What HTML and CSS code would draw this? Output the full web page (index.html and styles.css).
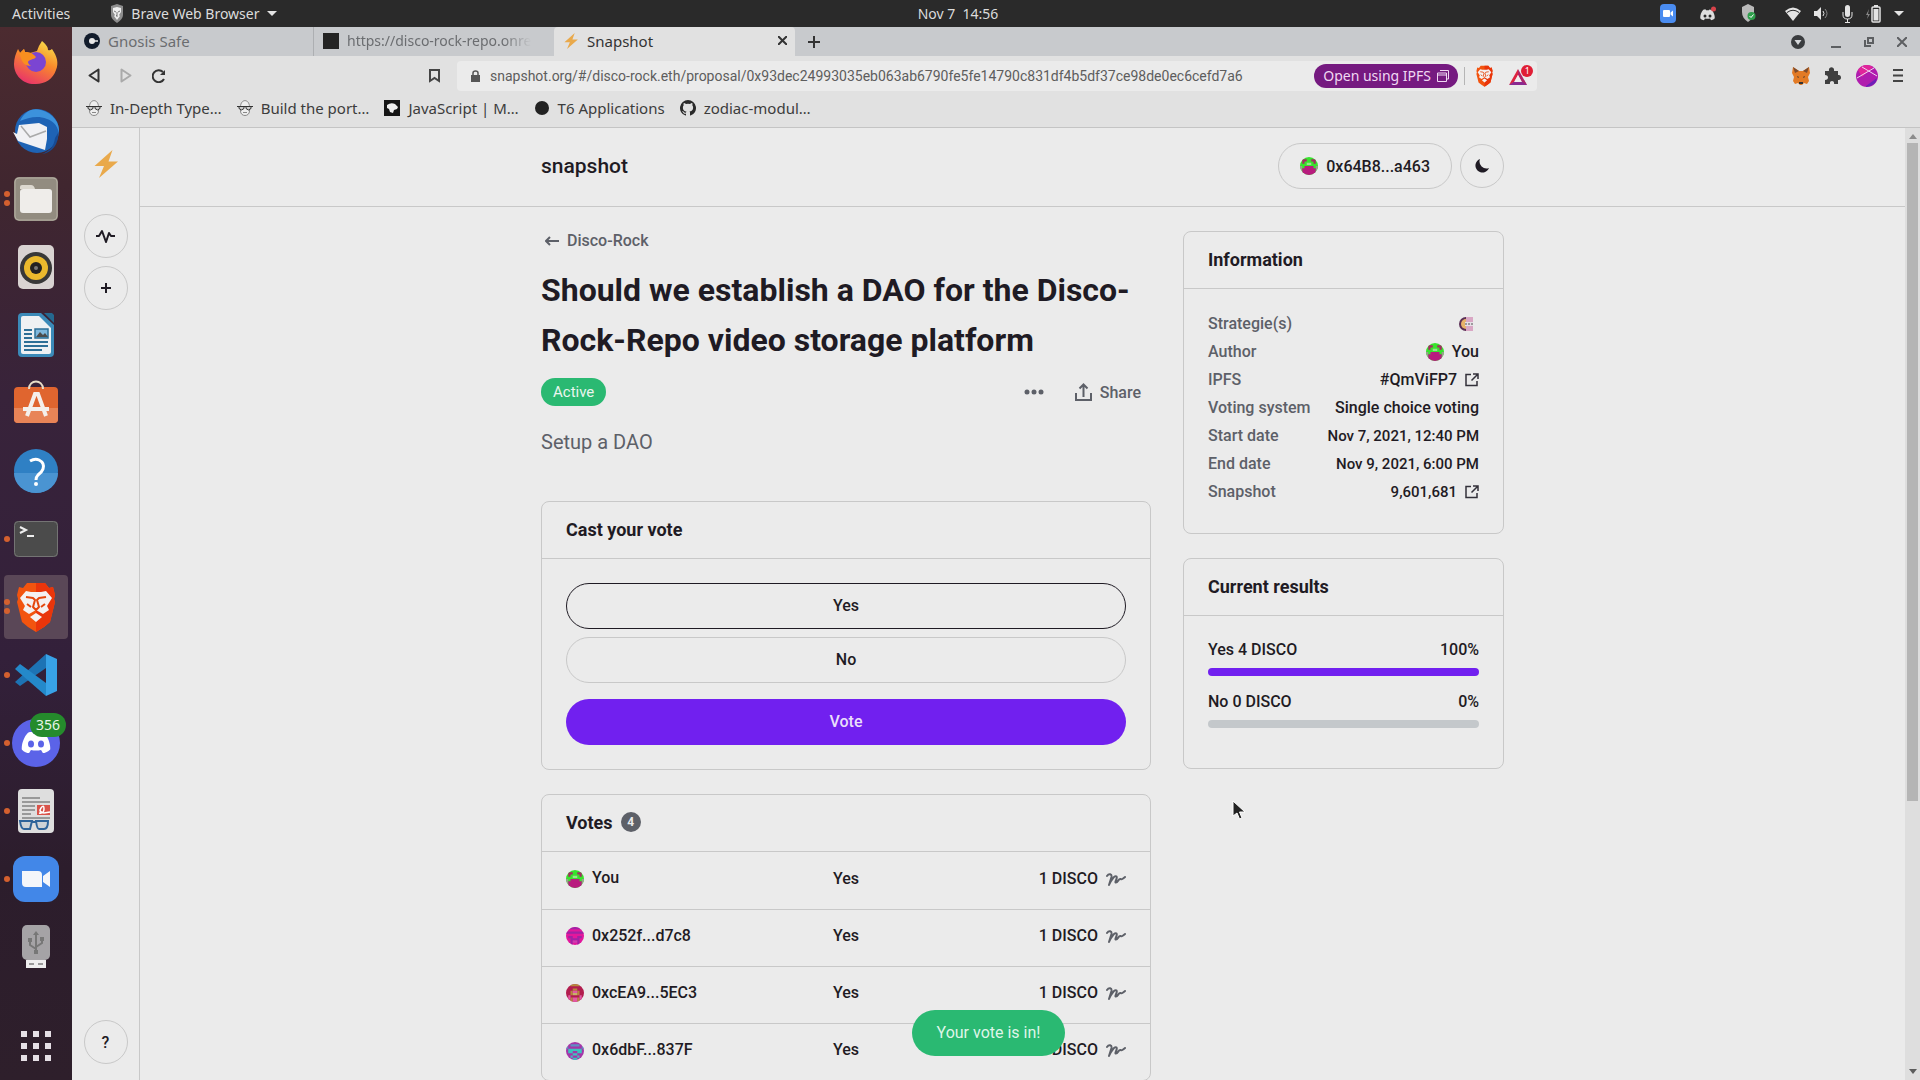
FILE: index.html
```
<!DOCTYPE html>
<html lang="en">
<head>
    <meta charset="UTF-8">
    <meta name="viewport" content="width=device-width, initial-scale=1.0">
    <title>Snapshot</title>
    <link rel="stylesheet" href="styles.css">
</head>
<body>
    <!-- shared icons -->
    <svg class="sprite" aria-hidden="true">
        <symbol id="bolt" viewBox="0 0 24 28">
            <path fill="#e9a94b" d="M18.500 0 0.500 16h9.500L5 28 24 11.500h-9.500z"/>
        </symbol>
        <symbol id="face" viewBox="0 0 16 16">
            <path fill="#eee" stroke="#888" d="M3.500 7c0-8.500 9-8.500 9 0v4c0 6-9 6-9 0z"/>
            <path fill="#ccc" stroke="#333" d="M0 6.500h16M2 6.500h5v2q-2.500 3-5 0zM9 6.500h5v2q-2.500 3-5 0z"/>
            <path stroke="#888" d="M6 12.500h4"/>
        </symbol>
        <symbol id="ava-you" viewBox="0 0 8 8">
            <path fill="#37e22d" d="M0 0h8v8H0z"/>
            <path fill="#a52a63" d="M1 1h2v1H1zM5 1h2v1H5zM1 2h1v1H1zM6 2h1v1H6z"/>
            <path fill="#9be08f" d="M3 2.500h2v1H3z"/>
            <path fill="#98a08d" d="M0 4h1v3H0zM7 4h1v3H7z"/>
            <path fill="#b81b7e" d="M2 4h4v1h1v3H1V5h1z"/>
        </symbol>
        <symbol id="ava-pink" viewBox="0 0 8 8">
            <path fill="#e3179c" d="M0 0h8v8H0z"/>
            <path fill="#a022a5" d="M1 0h6v1H1zM0 2h8v1H0zM1 4h2v1H1zM5 4h2v1H5zM2 6h1v2H2zM5 6h1v2H5zM2 5h4v1H2z"/>
            <path fill="#cc3fb0" d="M3 6h2v1H3z"/>
        </symbol>
        <symbol id="ava-red" viewBox="0 0 8 8">
            <path fill="#b21d4e" d="M0 0h8v8H0z"/>
            <path fill="#b58a3b" d="M2 0h4v1H2zM2 3h1v2H2zM5 3h1v2H5zM3 2h2v1H3zM2 6h1v2H2zM5 6h1v2H5z"/>
            <path fill="#e358a5" d="M3 3h2v1H3zM1 5h1v2H1zM6 5h1v2H6zM3 6h2v2H3z"/>
            <path fill="#c7b06a" d="M3 4h2v1H3z"/>
        </symbol>
        <symbol id="ava-teal" viewBox="0 0 8 8">
            <path fill="#a535a8" d="M0 0h8v8H0z"/>
            <path fill="#5f8fc4" d="M2 1h4v1H2zM0 2h1v1H0zM7 2h1v1H7z"/>
            <path fill="#3cc3bd" d="M1 3h6v1H1zM1 4h2v1H1zM5 4h2v1H5zM3 5h2v1H3zM2 6h1v1H2zM5 6h1v1H5zM3 7h2v1H3z"/>
        </symbol>
        <symbol id="sign" viewBox="0 0 20 14">
            <path fill="none" stroke="#5d6068" stroke-width="2" stroke-linecap="round" stroke-linejoin="round" d="M1 3c2-3 5-2 4.500 1L3 12C5 7 9 2 10.500 3.500S8 9.500 10 9.500s2.500-4 4.500-3.500 1 1 4.500-2"/>
        </symbol>
        <symbol id="external" viewBox="0 0 14 14">
            <path fill="none" stroke="#33313a" stroke-width="1.500" d="M6 1.500H1v11h11V8M8 1h5v5M13 1 6.500 7.500"/>
        </symbol>
        <symbol id="lion" viewBox="0 0 40 50">
            <path fill="#f2540f" d="M11 1h18l4 5 4-1 2 8-1 4 1 3-5 20-6 5-8 5-8-5-6-5L1 20l1-3-1-4 2-8 4 1z"/>
            <path fill="#e9350b" d="M20 1h9l4 5 4-1 2 8-1 4 1 3-5 20-6 5-8 5z"/>
            <path fill="#f4f1f1" d="M10 9l5 1h10l5-1 6 7-5 8 2 4-6 4-7-4-7 4-6-4 2-4-5-8zM14 35l6-4 6 4-6 5z"/>
            <path fill="none" stroke="#e4470d" stroke-width="2" stroke-linejoin="round" d="M10 15l7 1 2 2-2 7 3 3 3-3-2-7 2-2 7-1M11 22l4 3M29 22l-4 3"/>
        </symbol>
        <symbol id="discord" viewBox="0 0 32 24">
            <path d="M7 1c2-1 4-1.500 5-1l1 2q3-.5 6 0l1-2c2 0 4 .5 6 2 3 4 6 11 5.500 17-3 3-6 4-8 4l-2-3.500q-5.500 1.500-11 0L8.500 23C6 23 3 22 .500 19 0 13 3 5 7 1z"/>
        </symbol>
    </svg>

    <header class="topbar">
        <div class="topbar-left">
            <button>Activities</button>
            <button class="app-menu">
                <svg width="14" height="19" viewBox="0 0 14 19"><path fill="#8d8d8d" d="M1 2l6-2 6 2v9q0 4-6 8-6-4-6-8z"/><path fill="#eee" d="M3 4l4-1 4 1v4l-2 3 1 1-3 4-3-4 1-1-2-3z"/><path stroke="#777" fill="none" d="M4 7l2 1M10 7 8 8M7 8v3l-1 1h2"/></svg>
                Brave Web Browser
                <span class="caret"></span>
            </button>
        </div>
        <time>Nov 7&nbsp; 14:56</time>
        <div class="topbar-right">
            <svg width="16" height="19" viewBox="0 0 16 19"><rect width="16" height="19" rx="4" fill="#4a8cf0"/><rect x="3" y="6" width="7" height="7" rx="1" fill="#fff"/><path fill="#fff" d="M10.500 8.500 13 6.500v6l-2.500-2z"/></svg>
            <svg class="tray-discord" width="17" height="16" viewBox="0 0 17 16"><use href="#discord" x="0" y="3" width="15" height="12" fill="#ddd"/><circle cx="5" cy="10" r="1.500" fill="#2a2a2a"/><circle cx="10" cy="10" r="1.500" fill="#2a2a2a"/><circle cx="13.500" cy="3" r="2.500" fill="#d8434a"/></svg>
            <svg class="tray-shield" width="14" height="19" viewBox="0 0 14 19"><path fill="#b9b9b9" d="M0 3l6-3 6 3v5q0 6-6 10-6-4-6-10z"/><circle cx="9.500" cy="12" r="4" fill="#2e9e4b"/><path d="M7.500 12l1.500 1.500 2.500-3" stroke="#fff" fill="none"/></svg>
            <svg width="16" height="14" viewBox="0 0 16 14"><path fill="#e4e4e4" d="M8 14 0 4q8-7 16 0z"/><path stroke="#2a2a2a" fill="none" d="M2 5.500q6-4.500 12 0"/></svg>
            <svg width="15" height="15" viewBox="0 0 15 15"><path fill="#e4e4e4" d="M0 5h3l4-4v13l-4-4H0z"/><path fill="none" stroke="#e4e4e4" d="M9 5q2 2.500 0 5"/><path fill="none" stroke="#888" d="M11 3q4 4.500 0 9"/></svg>
            <svg width="11" height="18" viewBox="0 0 11 18"><rect x="3" width="5" height="12" rx="2.500" fill="#e4e4e4"/><path fill="none" stroke="#e4e4e4" d="M1 7v3q0 4 4.500 4T10 10V7M5.500 14v3.500M3 17.500h5"/></svg>
            <svg width="15" height="18" viewBox="0 0 15 18"><path fill="#888" d="M3 4 0 10h2l-1 4 3-5H2z"/><rect x="6" y="2" width="8" height="15" rx="1" fill="none" stroke="#e4e4e4" stroke-width="1.500"/><path fill="#e4e4e4" d="M8 0h4v2H8zM7.500 4h5v11.500h-5z"/></svg>
            <span class="caret"></span>
        </div>
    </header>

    <div class="desktop">
        <nav class="dock">
            <a href="#" title="Firefox"><svg width="48" height="48" viewBox="0 0 48 48"><defs><linearGradient id="ff" x1=".8" y1="0" x2=".3" y2="1"><stop offset="0" stop-color="#f7e14b"/><stop offset=".45" stop-color="#f98a2b"/><stop offset="1" stop-color="#e8336a"/></linearGradient></defs><path fill="url(#ff)" d="M30 2c3 3 6 5 6 9 3 1 3-1 4-1 5 7 7 14 4 21-3 9-11 14-20 14C12 46 2 37 2 25c0-6 2-11 4-15l2 4 4-4 1 3 5 1 7-2q2-6 5-10z"/><circle cx="24" cy="23" r="10" fill="#7b45d2"/><path fill="#f98f1f" d="M6 10l2 4 4-4 1 3c3 0 6 0 9 3l2 2c-2 3-7 2-8 5 0 2 2 3 3 4-5 0-9-3-10-8z"/></svg></a>
            <a href="#" title="Thunderbird"><svg width="48" height="48" viewBox="0 0 48 48"><circle cx="25" cy="24" r="22" fill="#1e63b5"/><path fill="#3c92dc" d="M8 14C12 5 20 0 29 3c12 3 19 13 18 23-2-8-6-12-12-14-10-4-19-1-27 2z"/><path fill="#174b94" d="M30 47c8-3 12-8 13-16l3-5c1 11-6 20-16 21z"/><path fill="#f1f1f4" d="M7 18l20-2 8 4v12l-2 11-27-9-5-9 4 2z"/><path d="M9 19l9 11 16-6" fill="none" stroke="#aaa" stroke-width="1.500"/></svg></a>
            <a href="#" class="open two" title="Files"><svg width="44" height="44" viewBox="0 0 44 44"><rect width="44" height="44" rx="5" fill="#928c80"/><rect x="1" y="1" width="42" height="42" rx="4" fill="none" stroke="#b3ada1"/><path fill="#dcd8cf" d="M6 10q0-2 2-2h9q3 0 4 4H6z"/><rect x="6" y="12" width="32" height="24" rx="3" fill="#efedea"/></svg></a>
            <a href="#" title="Rhythmbox"><svg width="38" height="46" viewBox="0 0 38 46"><rect x="1" y="1" width="36" height="44" rx="5" fill="#d9d3d2"/><circle cx="19" cy="24" r="16" fill="#383838"/><circle cx="19" cy="24" r="12" fill="#eab92d"/><circle cx="19" cy="24" r="6" fill="#222"/><circle cx="19" cy="24" r="2" fill="#777"/></svg></a>
            <a href="#" title="LibreOffice Writer"><svg width="36" height="44" viewBox="0 0 36 44"><path fill="#3b8ab8" d="M4 0h19l13 12v28q0 4-4 4H4q-4 0-4-4V4q0-4 4-4z"/><path fill="#25688f" d="M26 0h8l2 2v8z"/><path fill="#eef1f3" d="M5 3h16l12 12v24q0 2-2 2H5q-2 0-2-2V5q0-2 2-2z"/><path stroke="#2d6f96" stroke-width="2" d="M6 17h8M6 21h8M6 25h8M6 29h24M6 33h24M6 37h18"/><path fill="#7fb8dd" stroke="#2d6f96" stroke-width="1.500" d="M17 16h13v9H17z"/><path fill="#4c4c4c" d="M18 24l4-5 3 3 2-2 3 4z"/></svg></a>
            <a href="#" title="Ubuntu Software"><svg width="44" height="46" viewBox="0 0 44 46"><rect y="7" width="44" height="36" rx="4" fill="#e0652f"/><path fill="#e88457" d="M0 28h44v11q0 4-4 4H4q-4 0-4-4z"/><path d="M15 9c0-10 14-10 14 0" fill="none" stroke="#e8ddc8" stroke-width="2"/><path fill="none" stroke="#f4f0ec" stroke-width="4" d="M13 36l8-22h3l8 22M9 29h26"/></svg></a>
            <a href="#" title="Help"><svg width="44" height="44" viewBox="0 0 44 44"><circle cx="22" cy="22" r="22" fill="#2f80c4"/><path fill="#4a94d2" d="M0 24h44a22 20 0 0 1-44 0z"/><path d="M16 12q5-3 9-1 6 3 4 9-1 3-5 6-2 2-2 5" fill="none" stroke="#fff" stroke-width="3"/><circle cx="22" cy="35" r="2" fill="#fff"/></svg></a>
            <a href="#" class="open" title="Terminal"><svg width="44" height="36" viewBox="0 0 44 36"><rect width="44" height="36" rx="4" fill="#4b4b4b"/><rect x=".5" y=".5" width="43" height="35" rx="4" fill="none" stroke="#747474"/><path fill="none" stroke="#eee" stroke-width="2" d="M6 6l6 3-6 3M13 15h7"/></svg></a>
            <a href="#" class="open two current" title="Brave"><svg width="40" height="50"><use href="#lion"/></svg></a>
            <a href="#" class="open" title="Visual Studio Code"><svg width="42" height="42" viewBox="0 0 42 42"><path fill="#1d73b4" d="M31 0v14L5 32l-5-4z"/><path fill="#2489ca" d="M5 10 31 29v13L0 15z"/><path fill="#38a2e6" d="M31 0l11 5v32l-11 5z"/></svg></a>
            <a href="#" class="open" title="Discord"><svg width="48" height="48" viewBox="0 0 48 48"><circle cx="24" cy="24" r="24" fill="#5b63e8"/><use href="#discord" x="9" y="13" width="30" height="22" fill="#fff"/><ellipse cx="19" cy="25" rx="3" ry="3.500" fill="#5b63e8"/><ellipse cx="29" cy="25" rx="3" ry="3.500" fill="#5b63e8"/></svg><span class="unread">356</span></a>
            <a href="#" class="open" title="Document Viewer"><svg width="36" height="44" viewBox="0 0 36 44"><rect width="36" height="44" rx="4" fill="#dedede"/><path stroke="#999" stroke-width="2" d="M4 9h18M4 13h28M4 17h13M4 21h13M4 25h9M4 29h28"/><path fill="#d9534a" d="M19 16h13v10H19z"/><path d="M21 24q5 1 5-4t-3-1 3 5l6-1" fill="none" stroke="#fff" stroke-width="1.500"/><path fill="#cfd3d6" stroke="#2f649a" stroke-width="2" d="M2 32h12l-2 8H6q-3 0-4-8zM18 32h12q0 8-4 8h-5q-2 0-3-8zM14 33h4"/></svg></a>
            <a href="#" class="open" title="Zoom"><svg width="46" height="46" viewBox="0 0 46 46"><rect width="46" height="46" rx="12" fill="#4287e8"/><path fill="#f4f6fa" d="M9 15h16q4 0 4 4v12H13q-4 0-4-4zM30 20l7-5v16l-7-5z"/></svg></a>
            <a href="#" title="USB drive"><svg width="28" height="44" viewBox="0 0 28 44"><rect width="28" height="35" rx="5" fill="#a5a3a6"/><path fill="#eee" d="M4 35h20v8H4z"/><path fill="#999" d="M7 38h5v2H7zM16 38h5v2h-5z"/><path fill="none" stroke="#777" stroke-width="2" d="M14 28V9M14 24l-6-4v-4M14 22l6-4v-4"/><path fill="#777" d="M11 10l3-4 3 4zM12 25h4v4h-4zM6 13h4v4H6zM18 12h4v4h-4z"/></svg></a>
            <a href="#" class="all-apps" title="Show Applications"><svg width="30" height="30" viewBox="0 0 30 30"><path stroke="#e6e0e6" stroke-width="6" stroke-dasharray="6 6" d="M0 3h30M0 15h30M0 27h30"/></svg></a>
        </nav>

        <div class="browser">
            <div class="tabs">
                <div class="tab">
                    <svg width="16" height="16" viewBox="0 0 16 16"><circle cx="8" cy="8" r="8" fill="#121c2c"/><circle cx="8" cy="8" r="3" fill="#e8e8e8"/><path d="M8 8h6" stroke="#e8e8e8" stroke-width="1.500"/></svg>
                    <span>Gnosis Safe</span>
                </div>
                <div class="tab">
                    <svg width="16" height="16"><path fill="#242424" d="M0 0h16v16H0z"/></svg>
                    <span class="faded">https://disco-rock-repo.onre</span>
                </div>
                <div class="tab active">
                    <svg width="16" height="16"><use href="#bolt"/></svg>
                    <span>Snapshot</span>
                    <button aria-label="Close tab"><svg width="9" height="9" viewBox="0 0 9 9"><path stroke="#333" stroke-width="2" d="M0 0l9 9M9 0 0 9"/></svg></button>
                </div>
                <button class="new-tab" aria-label="New tab"><svg width="12" height="12" viewBox="0 0 12 12"><path stroke="#333" stroke-width="2" d="M6 0v12M0 6h12"/></svg></button>
                <div class="window-buttons">
                    <button aria-label="Search tabs"><svg width="14" height="14" viewBox="0 0 14 14"><circle cx="7" cy="7" r="7" fill="#3a3c3f"/><path fill="#d5d7da" d="M3.500 5h7L7 10z"/></svg></button>
                    <button aria-label="Minimize"><svg width="10" height="12" viewBox="0 0 10 12"><path stroke="#5d5f62" stroke-width="2" d="M0 11h10"/></svg></button>
                    <button aria-label="Restore"><svg width="10" height="10" viewBox="0 0 10 10"><path fill="none" stroke="#5d5f62" stroke-width="2" d="M4 1h5v5H4zM1 3v6h6"/></svg></button>
                    <button aria-label="Close"><svg width="10" height="10" viewBox="0 0 10 10"><path stroke="#5d5f62" stroke-width="2" d="M0 0l10 10M10 0 0 10"/></svg></button>
                </div>
            </div>

            <div class="toolbar">
                <div class="nav-buttons">
                    <button aria-label="Back"><svg width="12" height="15" viewBox="0 0 12 15"><path fill="none" stroke="#333" stroke-width="2" stroke-linejoin="round" d="M10.500 1.500v12L1.500 7.500z"/></svg></button>
                    <button aria-label="Forward" disabled><svg width="12" height="15" viewBox="0 0 12 15"><path fill="none" stroke="#aaa" stroke-width="2" stroke-linejoin="round" d="M1.500 1.500v12l9-6z"/></svg></button>
                    <button aria-label="Reload"><svg width="14" height="14" viewBox="0 0 14 14"><path fill="none" stroke="#333" stroke-width="2" d="M12 10A6 6 0 1 1 11 3"/><path fill="#333" d="M13 1v5H8z"/></svg></button>
                </div>
                <button class="save" aria-label="Bookmark"><svg width="11" height="14" viewBox="0 0 11 14"><path fill="none" stroke="#444" stroke-width="2" d="M1 1h9v11L5.500 9 1 12z"/></svg></button>
                <div class="address">
                    <svg width="9" height="12" viewBox="0 0 9 12"><path fill="#555" d="M0 5h9v7H0z"/><path fill="none" stroke="#555" stroke-width="1.500" d="M2 5V3q0-2 2.500-2T7 3v2"/></svg>
                    <input type="text" aria-label="Address" value="snapshot.org/#/disco-rock.eth/proposal/0x93dec24993035eb063ab6790fe5fe14790c831df4b5df37ce98de0ec6cefd7a6">
                    <button class="ipfs">Open using IPFS <svg width="12" height="12" viewBox="0 0 12 12"><path fill="none" stroke="#f0d8f3" d="M3 .5h8.500V9H10M.5 3h9v8.500h-9zM.5 5h9"/></svg></button>
                    <i class="divider"></i>
                    <button class="shield" aria-label="Brave Shields"><svg width="17" height="22"><use href="#lion"/></svg></button>
                    <button class="rewards" aria-label="Brave Rewards"><svg width="24" height="22" viewBox="0 0 24 22"><path fill="#8a2a90" d="M0 20h18l-3-5H6z"/><path fill="#dd2440" d="M9 4 0 20l6-4 3-6z"/><path fill="#b02468" d="M9 4l9 16-6-4-3-6z"/><path fill="#eee" d="M9 10l4 7H5z"/><circle cx="18" cy="6" r="6" fill="#e01e35"/></svg><span>1</span></button>
                </div>
                <div class="extensions">
                    <button aria-label="MetaMask"><svg width="18" height="18" viewBox="0 0 18 18"><path fill="#e27a25" d="M1 0l6 4h4l6-4 1 6-2 4 1 4-2 3-3-1-2 2H8l-2-2-3 1-2-3 1-4-2-4z"/><path fill="#7d4b2d" d="M1 0l6 4-4 2zM17 0l-6 4 4 2z"/><path fill="#333" d="M5 9l2 1-1 1zM13 9l-2 1 1 1zM7 15h4v2H7z"/></svg></button>
                    <button aria-label="Extensions"><svg width="16" height="17" viewBox="0 0 16 17"><path fill="#3f3f3f" d="M0 4h4c-1-5 6-5 5 0h4v4c4-1 4 6 0 5v4H9c1-4-5-4-4 0H0v-4c4 0 4-5 0-5z"/></svg></button>
                    <button aria-label="Profile"><svg width="22" height="22" viewBox="0 0 22 22"><circle cx="11" cy="11" r="11" fill="#b01cae"/><path fill="#e0259a" d="M2 5Q8-3 17 2L6 12z"/><path fill="#6c20b8" d="M10 21l11-8q-1 8-11 9z"/><path stroke="#efd6f0" fill="none" d="M1 13 18 3M6 2l15 9"/></svg></button>
                    <button aria-label="Menu"><svg width="10" height="13" viewBox="0 0 10 13"><path stroke="#444" stroke-width="2" d="M0 1h10M0 6.500h10M0 12h10"/></svg></button>
                </div>
            </div>

            <div class="bookmarks">
                <a href="#"><svg width="16" height="16"><use href="#face"/></svg>In-Depth Type…</a>
                <a href="#"><svg width="16" height="16"><use href="#face"/></svg>Build the port…</a>
                <a href="#"><svg width="16" height="16" viewBox="0 0 16 16"><path fill="#151515" d="M0 0h16v16H0z"/><path fill="#eee" d="M3 5q4-3 8-1l3 3-1 2-3 1-1 3-3-1-1-3-2-1z"/></svg>JavaScript | M…</a>
                <a href="#"><svg width="16" height="16" viewBox="0 0 16 16"><circle cx="8" cy="8" r="7" fill="#222"/></svg>T6 Applications</a>
                <a href="#"><svg width="16" height="16" viewBox="0 0 16 16"><path fill="#2a2a2a" d="M8 0a8 8 0 0 0-2.500 15.600c.4.100.5-.2.500-.4v-1.500c-2.200.5-2.700-1-2.700-1-.4-.9-.9-1.200-.9-1.200-.7-.5.100-.5.100-.5.800.1 1.200.8 1.200.8.700 1.300 1.900.9 2.300.7.100-.5.300-.9.500-1.100-1.800-.2-3.600-.9-3.600-4 0-.9.300-1.600.8-2.100-.1-.3-.4-1.100.1-2.200 0 0 .7-.2 2.200.8a7.600 7.600 0 0 1 4 0c1.500-1 2.200-.8 2.200-.8.500 1.100.2 1.900.1 2.200.5.500.8 1.200.8 2.100 0 3.100-1.900 3.700-3.600 3.900.3.300.5.800.5 1.500v2.400c0 .2.100.5.500.4A8 8 0 0 0 8 0z"/></svg>zodiac-modul…</a>
            </div>

            <div class="page">
                <aside class="sidebar">
                    <a href="#" class="logo" aria-label="Snapshot"><svg width="24" height="28"><use href="#bolt"/></svg></a>
                    <button class="round" aria-label="Activity"><svg width="19" height="14" viewBox="0 0 19 14"><path fill="none" stroke="#1f1b24" stroke-width="2" stroke-linejoin="round" d="M0 7h3l3-5 4 11 3-9 2 3h4"/></svg></button>
                    <button class="round" aria-label="New space"><svg width="10" height="10" viewBox="0 0 10 10"><path stroke="#1f1b24" stroke-width="2" d="M5 0v10M0 5h10"/></svg></button>
                    <button class="round help">?</button>
                </aside>

                <div class="content">
                    <header class="page-header">
                        <div class="container">
                            <a href="#" class="brand">snapshot</a>
                            <button class="account"><svg class="avatar"><use href="#ava-you"/></svg>0x64B8...a463</button>
                            <button class="round theme" aria-label="Dark mode"><svg width="14" height="14" viewBox="0 0 14 14"><path fill="#1f1b24" d="M5 0a7 7 0 1 0 9 9A7 7 0 0 1 5 0z"/></svg></button>
                        </div>
                    </header>

                    <div class="container columns">
                        <main>
                            <a href="#" class="back"><svg width="14" height="10" viewBox="0 0 14 10"><path fill="none" stroke="#5d6068" stroke-width="2" d="M14 5H2M5 1 1 5l4 4"/></svg>Disco-Rock</a>
                            <h1>Should we establish a DAO for the Disco-Rock-Repo video storage platform</h1>
                            <div class="meta">
                                <span class="status">Active</span>
                                <button class="more" aria-label="More"><svg width="20" height="6" viewBox="0 0 20 6"><circle cx="3" cy="3" r="2.500"/><circle cx="10" cy="3" r="2.500"/><circle cx="17" cy="3" r="2.500"/></svg></button>
                                <button class="share"><svg width="17" height="18" viewBox="0 0 17 18"><path fill="none" stroke="#5d6068" stroke-width="2" d="M1 10v7h15v-7M8.500 14V2M4.500 5.500l4-4 4 4"/></svg>Share</button>
                            </div>
                            <p class="body">Setup a DAO</p>

                            <section class="card">
                                <h2>Cast your vote</h2>
                                <div class="card-body choices">
                                    <button class="choice selected">Yes</button>
                                    <button class="choice">No</button>
                                    <button class="choice submit">Vote</button>
                                </div>
                            </section>

                            <section class="card">
                                <h2>Votes <span class="count">4</span></h2>
                                <table class="votes">
                                    <tr><td><svg class="avatar"><use href="#ava-you"/></svg><a href="#">You</a></td><td>Yes</td><td>1 DISCO<svg class="sign"><use href="#sign"/></svg></td></tr>
                                    <tr><td><svg class="avatar"><use href="#ava-pink"/></svg><a href="#">0x252f...d7c8</a></td><td>Yes</td><td>1 DISCO<svg class="sign"><use href="#sign"/></svg></td></tr>
                                    <tr><td><svg class="avatar"><use href="#ava-red"/></svg><a href="#">0xcEA9...5EC3</a></td><td>Yes</td><td>1 DISCO<svg class="sign"><use href="#sign"/></svg></td></tr>
                                    <tr><td><svg class="avatar"><use href="#ava-teal"/></svg><a href="#">0x6dbF...837F</a></td><td>Yes</td><td>1 DISCO<svg class="sign"><use href="#sign"/></svg></td></tr>
                                </table>
                            </section>
                        </main>

                        <aside class="side">
                            <section class="card">
                                <h2>Information</h2>
                                <dl class="card-body info">
                                    <div><dt>Strategie(s)</dt><dd><svg class="strategy" viewBox="0 0 16 16"><path fill="#d9a7c4" d="M8 1h8v14H8z"/><path fill="#5b2f55" d="M9 1a7 7 0 0 0 0 14z"/><path fill="#e8b36a" d="M9 3a5 5 0 0 0 0 10z"/><path fill="#e6dfe6" d="M8 6h8v4H8z"/><path stroke="#555" d="M8 8h8" stroke-dasharray="2 1"/></svg></dd></div>
                                    <div><dt>Author</dt><dd><svg class="avatar"><use href="#ava-you"/></svg><a href="#">You</a></dd></div>
                                    <div><dt>IPFS</dt><dd><a href="#">#QmViFP7<svg class="external"><use href="#external"/></svg></a></dd></div>
                                    <div><dt>Voting system</dt><dd>Single choice voting</dd></div>
                                    <div><dt>Start date</dt><dd class="number">Nov 7, 2021, 12:40 PM</dd></div>
                                    <div><dt>End date</dt><dd class="number">Nov 9, 2021, 6:00 PM</dd></div>
                                    <div><dt>Snapshot</dt><dd class="number"><a href="#">9,601,681<svg class="external"><use href="#external"/></svg></a></dd></div>
                                </dl>
                            </section>

                            <section class="card">
                                <h2>Current results</h2>
                                <div class="card-body results">
                                    <div class="result"><span>Yes 4 DISCO</span><span>100%</span></div>
                                    <div class="bar"><div style="width: 100%"></div></div>
                                    <div class="result"><span>No 0 DISCO</span><span>0%</span></div>
                                    <div class="bar"><div style="width: 0%"></div></div>
                                </div>
                            </section>
                        </aside>
                    </div>
                </div>

                <div class="scrollbar"><i class="up"></i><i class="thumb"></i><i class="down"></i></div>
                <div class="toast" role="status">Your vote is in!</div>
            </div>
        </div>
    </div>

    <svg class="cursor" viewBox="0 0 14 20"><path fill="#222" stroke="#fff" d="M1 1v15l4-3 2.500 6 2.500-1-2.500-6H13z"/></svg>
</body>
</html>
```
FILE: styles.css
```
* {
    box-sizing: border-box;
}
body {
    margin: 0;
    height: 100vh;
    display: flex;
    flex-direction: column;
    overflow: hidden;
    font-family: "Noto Sans", "Open Sans", sans-serif;
    font-size: 14px;
    color: #3c3c3c;
    background: #2a2a2a;
}
button {
    font: inherit;
    color: inherit;
    background: none;
    border: none;
    padding: 0;
    cursor: pointer;
}
a {
    color: inherit;
    text-decoration: none;
}
svg {
    flex: none;
    display: block;
}
.sprite {
    position: absolute;
    width: 0;
    height: 0;
}

/* top panel */
.topbar {
    display: grid;
    grid-template-columns: 1fr auto 1fr;
    align-items: center;
    height: 27px;
    flex: none;
    padding: 0 16px 0 12px;
    color: #dcdcdc;
    background: #2a2a2a;
}
.topbar-left, .topbar-right, .app-menu {
    display: flex;
    align-items: center;
}
.topbar-left {
    gap: 40px;
}
.app-menu {
    gap: 7px;
}
.topbar-right {
    justify-content: flex-end;
    gap: 13px;
}
.tray-discord {
    margin-left: 11px;
}
.tray-shield {
    margin: 0 16px 0 12px;
}
.caret {
    border: 5px solid transparent;
    border-top-color: #e4e4e4;
    border-bottom: 0;
}

.desktop {
    flex: 1;
    min-height: 0;
    display: flex;
}

/* dock */
.dock {
    width: 72px;
    flex: none;
    display: flex;
    flex-direction: column;
    gap: 4px;
    padding: 4px 4px 2px;
    background: linear-gradient(#4c2b30, #40262f 15%, #38233a 35%, #33203a 60%, #2c1d2c 80%, #2e1f2b);
}
.dock a {
    position: relative;
    height: 64px;
    flex: none;
    display: flex;
    align-items: center;
    justify-content: center;
    border-radius: 4px;
}
.dock .current {
    background: #5a4757;
}
.dock .open::before {
    content: "";
    position: absolute;
    left: 0;
    top: 29px;
    width: 6px;
    height: 6px;
    border-radius: 50%;
    background: #d4602f;
}
.dock .two::before {
    top: 24px;
    box-shadow: 0 9px #d4602f;
}
.dock .all-apps {
    margin-top: auto;
}
.unread {
    position: absolute;
    left: 26px;
    top: 2px;
    width: 36px;
    line-height: 24px;
    border-radius: 12px;
    text-align: center;
    color: #e8f5e8;
    background: #258b2c;
}

/* browser */
.browser {
    flex: 1;
    min-width: 0;
    display: flex;
    flex-direction: column;
    background: #e1e1e1;
}
.tabs {
    display: flex;
    height: 29px;
    flex: none;
    font-size: 15px;
    line-height: 20px;
    background: #c8cacd;
}
.tab {
    width: 241px;
    display: flex;
    align-items: center;
    gap: 8px;
    padding: 0 0 2px 12px;
    color: #6b6d70;
}
.tab + .tab {
    padding-left: 9px;
    border-left: 1px solid #adafb2;
}
.tab + .tab.active {
    border: 0;
    border-radius: 4px 4px 0 0;
    color: #333;
    background: #e1e1e1;
}
.tab button {
    margin: 0 8px 0 auto;
}
.tab .faded {
    font-size: 14px;
    white-space: nowrap;
    -webkit-mask-image: linear-gradient(90deg, #000 85%, transparent);
    mask-image: linear-gradient(90deg, #000 85%, transparent);
}
.new-tab {
    margin-left: 13px;
}
.window-buttons {
    display: flex;
    align-items: center;
    gap: 23px;
    margin-left: auto;
    padding-right: 13px;
}
.window-buttons button:first-child {
    margin-right: 3px;
}
.toolbar {
    display: flex;
    align-items: center;
    height: 41px;
    flex: none;
    padding: 0 17px 2px 16px;
}
.nav-buttons {
    display: flex;
    gap: 20px;
}
.save {
    margin: 0 17px 0 auto;
}
.address {
    width: 1080px;
    height: 30px;
    display: flex;
    align-items: center;
    padding: 0 4px 0 14px;
    border-radius: 4px;
    color: #5d5d5d;
    background: #ebebeb;
}
.address input {
    flex: 1;
    min-width: 0;
    padding: 0;
    margin-left: 10px;
    border: 0;
    outline: 0;
    font: 14px Roboto, "Noto Sans", sans-serif;
    color: inherit;
    background: none;
}
.ipfs {
    display: flex;
    align-items: center;
    gap: 6px;
    height: 24px;
    padding: 0 9px;
    border-radius: 12px;
    color: #f0d8f3;
    background: #751a80;
}
.divider {
    width: 1px;
    height: 18px;
    margin: 0 11px 0 6px;
    background: #b5b5b5;
}
.shield {
    margin-right: 16px;
}
.rewards {
    position: relative;
}
.rewards span {
    position: absolute;
    right: 3px;
    top: 0;
    line-height: 12px;
    font-size: 9px;
    color: #fff;
}
.extensions {
    width: 366px;
    display: flex;
    align-items: center;
    justify-content: flex-end;
    gap: 15px;
}
.bookmarks {
    display: flex;
    align-items: center;
    gap: 15px;
    height: 31px;
    flex: none;
    padding: 0 14px 8px;
    font-size: 15px;
    border-bottom: 1px solid #c4c4c4;
}
.bookmarks a {
    display: flex;
    align-items: center;
    gap: 8px;
}

/* page */
.page {
    position: relative;
    flex: 1;
    min-height: 0;
    display: flex;
    font-family: Roboto, "Liberation Sans", sans-serif;
    font-size: 16px;
    font-weight: 500;
    color: #1f1b24;
    background: #ebebeb;
}
.sidebar {
    width: 68px;
    flex: none;
    display: flex;
    flex-direction: column;
    align-items: center;
    gap: 8px;
    padding: 22px 0 16px;
    border-right: 1px solid #c8c8c8;
}
.logo {
    margin-bottom: 28px;
}
.round {
    width: 44px;
    height: 44px;
    display: flex;
    align-items: center;
    justify-content: center;
    border: 1px solid #c8c8c8;
    border-radius: 50%;
}
.help {
    margin-top: auto;
}
.content {
    flex: 1;
    min-width: 0;
}
.container {
    max-width: 963px;
    margin: 0 auto;
}
.page-header {
    height: 79px;
    border-bottom: 1px solid #c8c8c8;
}
.page-header .container {
    display: flex;
    align-items: center;
    height: 76px;
}
.brand {
    margin-right: auto;
    font-size: 21px;
}
.account {
    display: flex;
    align-items: center;
    gap: 8px;
    height: 46px;
    padding: 0 21px;
    margin-right: 8px;
    border: 1px solid #c8c8c8;
    border-radius: 23px;
}
.avatar {
    width: 18px;
    height: 18px;
    border-radius: 50%;
}
.columns {
    display: flex;
    gap: 32px;
    padding-top: 24px;
}
main {
    flex: 1;
    min-width: 0;
}
.back {
    display: flex;
    align-items: center;
    gap: 8px;
    padding-left: 4px;
    line-height: 20px;
    color: #5d6068;
}
h1 {
    margin: 14px 0 13px;
    font-size: 32px;
    line-height: 50px;
    font-weight: 700;
}
.meta {
    display: flex;
    align-items: center;
    color: #5d6068;
    fill: #5d6068;
}
.status {
    padding: 0 12px;
    line-height: 28px;
    font-size: 15px;
    font-weight: 400;
    border-radius: 14px;
    color: #ebf5ef;
    background: #2ab972;
}
.more {
    margin-left: auto;
}
.share {
    display: flex;
    align-items: center;
    gap: 8px;
    margin: 0 10px 0 31px;
}
.body {
    margin: 22px 0 45px;
    font-size: 20px;
    line-height: 28px;
    font-weight: 400;
    color: #5d6068;
}
.card {
    margin-bottom: 24px;
    border: 1px solid #c8c8c8;
    border-radius: 8px;
}
.card h2 {
    display: flex;
    align-items: center;
    gap: 8px;
    height: 57px;
    margin: 0;
    padding: 0 24px 2px;
    font-size: 18px;
    font-weight: 700;
    border-bottom: 1px solid #c8c8c8;
}
.card-body {
    margin: 0;
    padding: 24px;
}
.choices {
    display: grid;
    gap: 8px;
}
.choice {
    height: 46px;
    padding-bottom: 2px;
    border: 1px solid #c8c8c8;
    border-radius: 23px;
}
.selected {
    border-color: #1f1b24;
}
.submit {
    margin-top: 8px;
    border: 0;
    color: #e9defa;
    background: #7120ef;
}
.count {
    width: 20px;
    line-height: 20px;
    border-radius: 50%;
    text-align: center;
    font-size: 12px;
    color: #ebebeb;
    background: #5d6068;
}
.votes {
    width: 100%;
    border-collapse: collapse;
    table-layout: fixed;
}
.votes td {
    height: 57px;
    padding: 0 0 4px;
    text-align: center;
}
.votes tr + tr td {
    border-top: 1px solid #c8c8c8;
}
.votes td:first-child {
    padding-left: 24px;
    text-align: left;
}
.votes td:last-child {
    padding-right: 24px;
    text-align: right;
}
.votes svg {
    display: inline-block;
    vertical-align: middle;
}
.votes .avatar {
    margin-right: 8px;
}
.sign {
    width: 20px;
    height: 14px;
    margin-left: 8px;
}
.side {
    width: 321px;
    flex: none;
}
.info {
    padding-top: 21px;
    padding-bottom: 27px;
}
.info div {
    display: flex;
    justify-content: space-between;
    line-height: 28px;
}
.info dt {
    color: #5d6068;
}
.info dd, .info a {
    display: flex;
    align-items: center;
    gap: 8px;
    margin: 0;
}
.info .number {
    font-size: 15px;
}
.strategy {
    width: 16px;
    height: 16px;
    margin-right: 6px;
}
.external {
    width: 14px;
    height: 14px;
}
.result {
    display: flex;
    justify-content: space-between;
    line-height: 20px;
}
.bar {
    height: 8px;
    margin: 8px 0 16px;
    border-radius: 4px;
    overflow: hidden;
    background: #c4c8cb;
}
.bar div {
    height: 100%;
    background: #7120ef;
}
.scrollbar {
    width: 15px;
    flex: none;
    display: flex;
    flex-direction: column;
    align-items: center;
    padding: 6px 0;
    background: #dedede;
}
.scrollbar .up, .scrollbar .down {
    border: 4px solid transparent;
}
.scrollbar .up {
    border-bottom: 5px solid #8c8c8c;
    border-top: 0;
}
.scrollbar .down {
    margin-top: auto;
    border-top: 5px solid #5c5c5c;
    border-bottom: 0;
}
.scrollbar .thumb {
    width: 11px;
    height: 70%;
    margin-top: 4px;
    background: #b5b5b5;
}

/* centred over the page, without the scrollbar */
.toast {
    position: absolute;
    left: 0;
    right: 15px;
    bottom: 24px;
    width: fit-content;
    margin: 0 auto;
    padding: 0 25px;
    line-height: 46px;
    font-weight: 400;
    border-radius: 23px;
    color: #dff5e9;
    background: #2ab972;
}
.cursor {
    position: absolute;
    left: 1232px;
    top: 800px;
    width: 14px;
    height: 20px;
}
```
